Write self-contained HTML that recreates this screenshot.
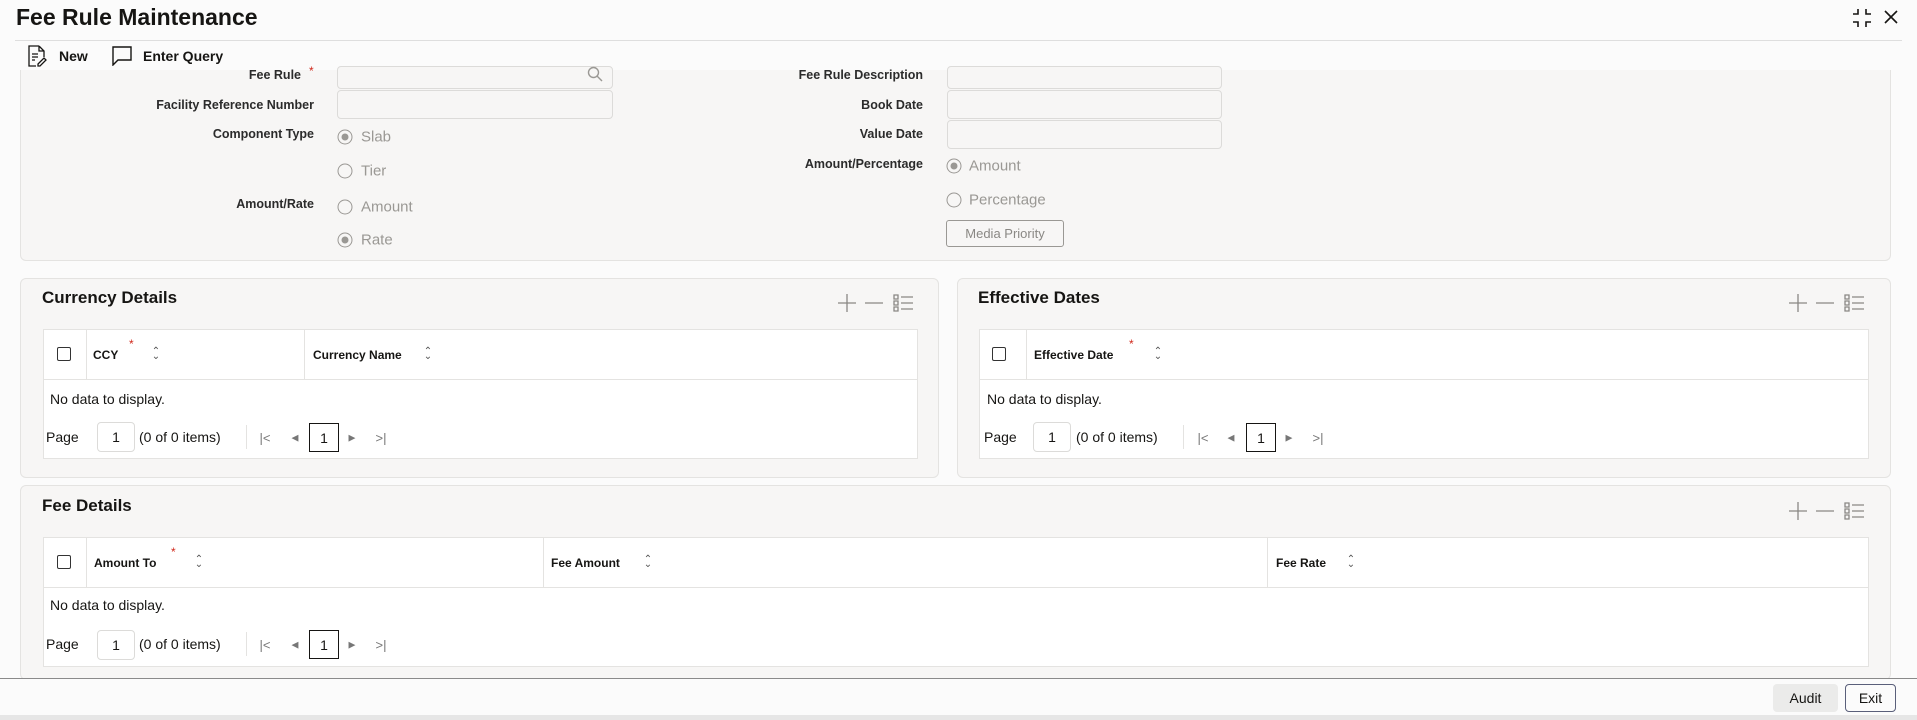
<!DOCTYPE html>
<html><head><meta charset="utf-8"><style>
*{box-sizing:border-box;margin:0;padding:0}
body{width:1917px;height:720px;overflow:hidden;background:#fbfbfb;font-family:"Liberation Sans",sans-serif;color:#161513;position:relative}
.a{position:absolute;white-space:nowrap}
.panel{position:absolute;background:#f7f6f5;border:1px solid #e4e3e1;border-radius:6px}
.lbl{position:absolute;font-size:12.5px;font-weight:bold;color:#2b2b2b;text-align:right;transform:translateY(-50%);white-space:nowrap}
.inp{position:absolute;background:#f7f6f5;border:1px solid #dcdbd9;border-radius:4px}
.rad{position:absolute;width:15px;height:15px;border:1px solid #9a9894;border-radius:50%;transform:translate(-50%,-50%)}
.rad.on::after{content:"";position:absolute;left:3px;top:3px;width:7px;height:7px;border-radius:50%;background:#9a9894}
.rt{position:absolute;font-size:15px;color:#9a9894;transform:translateY(-50%)}
.title{position:absolute;font-size:17px;font-weight:bold;color:#161513;transform:translateY(-50%)}
.tbl{position:absolute;background:#fff;border:1px solid #e4e3e1}
.cb{position:absolute;width:14px;height:14px;border:1px solid #333;border-radius:2px;transform:translate(-50%,-50%)}
.vd{position:absolute;width:1px;background:#e4e3e1}
.hd{position:absolute;font-size:12px;font-weight:bold;color:#161513;transform:translateY(-50%)}
.star{position:absolute;color:#d0291c;font-size:12px}
.sort{position:absolute;font-size:10px;color:#555;transform:translate(-50%,-50%);line-height:5px;text-align:center}
.t14{position:absolute;font-size:14px;color:#161513;transform:translateY(-50%)}
.box{position:absolute;border:1px solid #dcdbd9;border-radius:4px;background:#fff;font-size:14px;text-align:center}
.pg{position:absolute;font-size:13px;color:#777;transform:translate(-50%,-50%)}
</style></head><body>
<div class="a" style="left:16px;top:4px;font-size:23px;font-weight:bold">Fee Rule Maintenance</div>
<svg class="a" style="left:1852px;top:8px" width="20" height="20" viewBox="0 0 20 20" fill="none" stroke="#161513" stroke-width="1.6"><path d="M1 6h5V1M14 1v5h5M1 14h5v5M19 14h-5v5"/></svg>
<svg class="a" style="left:1883px;top:9px" width="16" height="16" viewBox="0 0 16 16" stroke="#161513" stroke-width="1.6"><path d="M2 2l12 12M14 2L2 14"/></svg>
<div class="a" style="left:15px;top:40px;width:1887px;height:1px;background:#dedede"></div>
<svg class="a" style="left:27px;top:45px" width="20" height="22" viewBox="0 0 20 22" fill="none" stroke="#161513" stroke-width="1.3"><path d="M12 1H2v20h7M12 1l5 5v6M12 1v5h5M5 9h6M5 12h6M5 15h3M11 19l6-6 2 2-6 6h-2z"/></svg>
<div class="a" style="left:59px;top:48px;font-size:14px;font-weight:bold">New</div>
<svg class="a" style="left:112px;top:46px" width="20" height="20" viewBox="0 0 20 20" fill="none" stroke="#161513" stroke-width="1.4"><path d="M1 1h18v13H6l-5 5z"/></svg>
<div class="a" style="left:143px;top:48px;font-size:14px;font-weight:bold">Enter Query</div>

<div class="panel" style="left:20px;top:70px;width:1871px;height:191px;border-top:none;border-radius:0 0 6px 6px"></div>
<div class="lbl" style="right:1616px;top:75px">Fee Rule</div><div class="star" style="left:309px;top:64px">*</div>
<div class="lbl" style="right:1603px;top:105px">Facility Reference Number</div>
<div class="lbl" style="right:1603px;top:134px">Component Type</div>
<div class="lbl" style="right:1603px;top:204px">Amount/Rate</div>
<div class="inp" style="left:337px;top:66px;width:276px;height:23px"></div>
<svg class="a" style="left:587px;top:66px" width="16" height="16" viewBox="0 0 16 16" fill="none" stroke="#9a9894" stroke-width="1.4"><circle cx="6.5" cy="6.5" r="5"/><path d="M10 10l5 5"/></svg>
<div class="inp" style="left:337px;top:90px;width:276px;height:29px"></div>
<div class="rad on" style="left:345px;top:137px"></div><div class="rt" style="left:361px;top:137px">Slab</div>
<div class="rad" style="left:345px;top:171px"></div><div class="rt" style="left:361px;top:171px">Tier</div>
<div class="rad" style="left:345px;top:207px"></div><div class="rt" style="left:361px;top:207px">Amount</div>
<div class="rad on" style="left:345px;top:240px"></div><div class="rt" style="left:361px;top:240px">Rate</div>
<div class="lbl" style="right:994px;top:75px">Fee Rule Description</div>
<div class="lbl" style="right:994px;top:105px">Book Date</div>
<div class="lbl" style="right:994px;top:134px">Value Date</div>
<div class="lbl" style="right:994px;top:164px">Amount/Percentage</div>
<div class="inp" style="left:947px;top:66px;width:275px;height:23px"></div>
<div class="inp" style="left:947px;top:90px;width:275px;height:29px"></div>
<div class="inp" style="left:947px;top:120px;width:275px;height:29px"></div>
<div class="rad on" style="left:954px;top:166px"></div><div class="rt" style="left:969px;top:166px">Amount</div>
<div class="rad" style="left:954px;top:200px"></div><div class="rt" style="left:969px;top:200px">Percentage</div>
<div class="a" style="left:946px;top:220px;width:118px;height:27px;border:1px solid #9a9894;border-radius:3px;font-size:13px;color:#8a8884;text-align:center;line-height:25px">Media Priority</div>

<!-- Currency Details -->
<div class="panel" style="left:20px;top:278px;width:919px;height:200px"></div>
<div class="title" style="left:42px;top:298px">Currency Details</div>
<svg class="a" style="left:836px;top:293px" width="80" height="20" viewBox="0 0 80 20" fill="none" stroke="#8a8884" stroke-width="1.3"><path d="M2 10h18M11 1v18M29 10h18M58 2h4v4h-4zM58 8h4v4h-4zM58 14h4v4h-4zM65 4h12M65 10h12M65 16h12"/></svg>
<div class="tbl" style="left:43px;top:329px;width:875px;height:130px"></div>
<div class="a" style="left:43px;top:379px;width:875px;height:1px;background:#e4e3e1"></div>
<div class="vd" style="left:86px;top:329px;height:50px"></div><div class="vd" style="left:304px;top:329px;height:50px"></div>
<div class="cb" style="left:64px;top:354px"></div>
<div class="hd" style="left:93px;top:355px">CCY</div><div class="star" style="left:129px;top:337px">*</div><div class="sort" style="left:156px;top:354px">⌃<br>⌄</div>
<div class="hd" style="left:313px;top:355px">Currency Name</div><div class="sort" style="left:428px;top:354px">⌃<br>⌄</div>
<div class="t14" style="left:50px;top:399px">No data to display.</div>
<div class="t14" style="left:46px;top:437px">Page</div>
<div class="box" style="left:97px;top:422px;width:38px;height:30px;line-height:28px">1</div>
<div class="t14" style="left:139px;top:437px">(0 of 0 items)</div>
<div class="vd" style="left:246px;top:425px;height:24px"></div>
<div class="pg" style="left:265px;top:438px">|&lt;</div><div class="pg" style="left:295px;top:438px;font-size:9px">◀</div>
<div class="box" style="left:309px;top:423px;width:30px;height:29px;line-height:28px;border-color:#161513;border-radius:0">1</div>
<div class="pg" style="left:352px;top:438px;font-size:9px">▶</div><div class="pg" style="left:381px;top:438px">&gt;|</div>

<!-- Effective Dates -->
<div class="panel" style="left:957px;top:278px;width:934px;height:200px"></div>
<div class="title" style="left:978px;top:298px">Effective Dates</div>
<svg class="a" style="left:1787px;top:293px" width="80" height="20" viewBox="0 0 80 20" fill="none" stroke="#8a8884" stroke-width="1.3"><path d="M2 10h18M11 1v18M29 10h18M58 2h4v4h-4zM58 8h4v4h-4zM58 14h4v4h-4zM65 4h12M65 10h12M65 16h12"/></svg>
<div class="tbl" style="left:979px;top:329px;width:890px;height:130px"></div>
<div class="a" style="left:979px;top:379px;width:890px;height:1px;background:#e4e3e1"></div>
<div class="vd" style="left:1026px;top:329px;height:50px"></div>
<div class="cb" style="left:999px;top:354px"></div>
<div class="hd" style="left:1034px;top:355px">Effective Date</div><div class="star" style="left:1129px;top:337px">*</div><div class="sort" style="left:1158px;top:354px">⌃<br>⌄</div>
<div class="t14" style="left:987px;top:399px">No data to display.</div>
<div class="t14" style="left:984px;top:437px">Page</div>
<div class="box" style="left:1033px;top:422px;width:38px;height:30px;line-height:28px">1</div>
<div class="t14" style="left:1076px;top:437px">(0 of 0 items)</div>
<div class="vd" style="left:1183px;top:425px;height:24px"></div>
<div class="pg" style="left:1203px;top:438px">|&lt;</div><div class="pg" style="left:1231px;top:438px;font-size:9px">◀</div>
<div class="box" style="left:1246px;top:423px;width:30px;height:29px;line-height:28px;border-color:#161513;border-radius:0">1</div>
<div class="pg" style="left:1289px;top:438px;font-size:9px">▶</div><div class="pg" style="left:1318px;top:438px">&gt;|</div>

<!-- Fee Details -->
<div class="panel" style="left:20px;top:485px;width:1871px;height:195px"></div>
<div class="title" style="left:42px;top:506px">Fee Details</div>
<svg class="a" style="left:1787px;top:501px" width="80" height="20" viewBox="0 0 80 20" fill="none" stroke="#8a8884" stroke-width="1.3"><path d="M2 10h18M11 1v18M29 10h18M58 2h4v4h-4zM58 8h4v4h-4zM58 14h4v4h-4zM65 4h12M65 10h12M65 16h12"/></svg>
<div class="tbl" style="left:43px;top:537px;width:1826px;height:130px"></div>
<div class="a" style="left:43px;top:587px;width:1826px;height:1px;background:#e4e3e1"></div>
<div class="vd" style="left:86px;top:537px;height:50px"></div><div class="vd" style="left:543px;top:537px;height:50px"></div><div class="vd" style="left:1267px;top:537px;height:50px"></div>
<div class="cb" style="left:64px;top:562px"></div>
<div class="hd" style="left:94px;top:563px">Amount To</div><div class="star" style="left:171px;top:545px">*</div><div class="sort" style="left:199px;top:562px">⌃<br>⌄</div>
<div class="hd" style="left:551px;top:563px">Fee Amount</div><div class="sort" style="left:648px;top:562px">⌃<br>⌄</div>
<div class="hd" style="left:1276px;top:563px">Fee Rate</div><div class="sort" style="left:1351px;top:562px">⌃<br>⌄</div>
<div class="t14" style="left:50px;top:605px">No data to display.</div>
<div class="t14" style="left:46px;top:644px">Page</div>
<div class="box" style="left:97px;top:630px;width:38px;height:30px;line-height:28px">1</div>
<div class="t14" style="left:139px;top:644px">(0 of 0 items)</div>
<div class="vd" style="left:246px;top:632px;height:24px"></div>
<div class="pg" style="left:265px;top:645px">|&lt;</div><div class="pg" style="left:295px;top:645px;font-size:9px">◀</div>
<div class="box" style="left:309px;top:630px;width:30px;height:29px;line-height:28px;border-color:#161513;border-radius:0">1</div>
<div class="pg" style="left:352px;top:645px;font-size:9px">▶</div><div class="pg" style="left:381px;top:645px">&gt;|</div>

<!-- Footer -->
<div class="a" style="left:0;top:678px;width:1917px;height:42px;background:#fbfbfb;border-top:1px solid #8a8a8a"></div>
<div class="a" style="left:0;top:715px;width:1917px;height:5px;background:#e6e6e6"></div>
<div class="a" style="left:1773px;top:684px;width:65px;height:28px;background:#ebebea;border-radius:4px;font-size:14px;text-align:center;line-height:28px">Audit</div>
<div class="a" style="left:1845px;top:684px;width:51px;height:28px;border:1px solid #5a5f7a;border-radius:4px;font-size:14px;text-align:center;line-height:26px">Exit</div>
</body></html>
